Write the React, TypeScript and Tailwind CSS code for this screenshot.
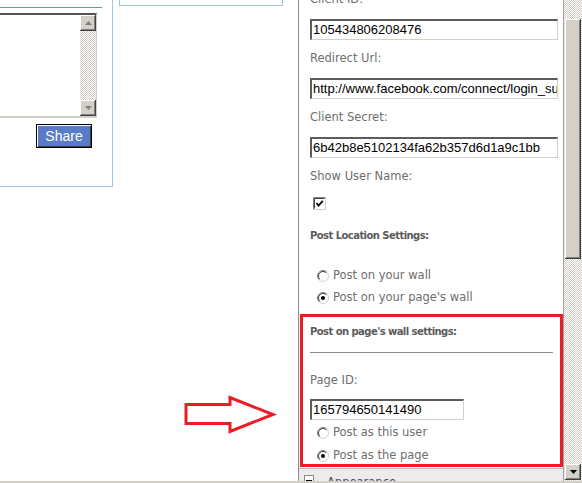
import React from 'react';

const labelCls = "text-[11.5px] leading-[15px] text-[#6e6e6e] font-['DejaVu_Sans',Verdana,sans-serif]";
const headCls = "text-[10px] leading-[15px] font-bold tracking-[-0.55px] text-[#5a5a5a] font-['DejaVu_Sans',Verdana,sans-serif]";
const ruleCls = "h-px w-[243px] bg-[#8c8c8c]";
const bevel = "bg-[#d4d0c8] shadow-[inset_-1px_-1px_0_#404040,inset_1px_1px_0_#ffffff,inset_-2px_-2px_0_#808080]";
const checker = "bg-[repeating-conic-gradient(#d4d0c8_0_25%,#ffffff_0_50%)] bg-[length:2px_2px]";

const Radio: React.FC<{ checked?: boolean }> = ({ checked = false }) => (
  <svg width="12" height="12" viewBox="0 0 12 12" className="shrink-0">
    <circle cx="6" cy="6" r="5.5" fill="#ffffff" />
    <path d="M2.1 9.9 A5.5 5.5 0 0 1 9.9 2.1" stroke="#808080" fill="none" />
    <path d="M9.9 2.1 A5.5 5.5 0 0 1 2.1 9.9" stroke="#d4d0c8" fill="none" />
    <path d="M2.8 9.2 A4.5 4.5 0 0 1 9.2 2.8" stroke="#404040" fill="none" />
    {checked && <circle cx="6" cy="6" r="2" fill="#000000" />}
  </svg>
);

const RadioRow: React.FC<{ text: string; checked?: boolean; className?: string }> = ({
  text,
  checked,
  className = ''
}) => (
  <div className={`flex items-center h-[15px] pl-[7px] gap-[4px] ${className}`}>
    <Radio checked={checked} />
    <span className={labelCls}>{text}</span>
  </div>
);

const TextBox: React.FC<{ value: string; width: string }> = ({ value, width }) => (
  <div
    className={`${width} h-[21px] border-t-2 border-l-2 border-r border-b border-t-[#5c5c5c] border-l-[#5c5c5c] border-r-[#d4d0c8] border-b-[#d4d0c8] overflow-hidden whitespace-nowrap pl-[1px] text-[13px] leading-[18px] text-black font-['Liberation_Sans',Arial,sans-serif]`}
  >
    {value}
  </div>
);

const Field: React.FC<{ label: string; value: string; first?: boolean }> = ({ label, value, first }) => (
  <>
    <div className={`${labelCls} ${first ? 'mt-[-8px]' : 'mt-[11px]'}`}>{label}</div>
    <div className="mt-[12px]">
      <TextBox value={value} width="w-[248px]" />
    </div>
  </>
);

const Arrow: React.FC = () => (
  <svg width="94" height="40" viewBox="0 0 94 40" className="block">
    <polygon
      points="2,9.5 46,9.5 46,2.5 89,19.5 46,36.5 46,28.5 2,28.5"
      fill="#ffffff"
      stroke="#ed1c24"
      strokeWidth="3"
      strokeLinejoin="miter"
    />
  </svg>
);

export default function App() {
  return (
    <div className="w-[582px] h-[483px] overflow-hidden bg-white flex flex-col">
      <div className="flex h-[481px]">
        {/* left side */}
        <div className="w-[298px] flex flex-col">
          <div className="flex items-start">
            <div className="w-[113px] h-[187px] border-r border-b border-[#9ec6e4] pt-[7px]">
              <div className="h-px w-[102px] bg-[#5b9bd5]" />
              <div className="mt-[5px] w-[97px] h-[105px] flex border-t-2 border-t-[#555555] border-r border-b-2 border-r-[#d4d0c8] border-b-[#d4d0c8]">
                <div className="flex-1 bg-white" />
                <div className={`w-[16px] flex flex-col ${checker}`}>
                  <div className={`h-[16px] flex items-center justify-center ${bevel}`}>
                    <svg width="7" height="4" viewBox="0 0 7 4"><polygon points="3.5,0 7,4 0,4" fill="#808080" /></svg>
                  </div>
                  <div className="flex-1" />
                  <div className={`h-[16px] flex items-center justify-center ${bevel}`}>
                    <svg width="7" height="4" viewBox="0 0 7 4"><polygon points="0,0 7,0 3.5,4" fill="#808080" /></svg>
                  </div>
                </div>
              </div>
              <div className="mt-[6px] ml-[36px] w-[56px] h-[24px] border border-black bg-[#5a7bc7] shadow-[inset_1px_1px_0_#ffffff,inset_-1px_-1px_0_#404040] flex items-center justify-center text-white text-[14px] font-['Liberation_Sans',Arial,sans-serif]">
                Share
              </div>
            </div>
            <div className="ml-[6px] w-[164px] h-[6px] border-x border-b border-[#9ec6e4]" />
          </div>
          <div className="mt-[208px] ml-[184px]">
            <Arrow />
          </div>
        </div>

        {/* settings panel */}
        <div className="w-[265px] border-l border-[#8a8a8a] flex flex-col overflow-hidden pl-[11px]">
          <Field first label="Client ID:" value="105434806208476" />
          <Field label="Redirect Url:" value="http://www.facebook.com/connect/login_success.html" />
          <Field label="Client Secret:" value="6b42b8e5102134fa62b357d6d1a9c1bb" />
          <div className={`${labelCls} mt-[11px]`}>Show User Name:</div>
          <svg width="13" height="13" viewBox="0 0 13 13" className="mt-[13px] ml-[3px] shrink-0">
            <rect x="0" y="0" width="13" height="13" fill="#ffffff" />
            <path d="M0.5 12.5 V0.5 H12.5" stroke="#808080" fill="none" />
            <path d="M1.5 11.5 V1.5 H11.5" stroke="#404040" fill="none" />
            <path d="M0.5 12.5 H12.5 V0.5" stroke="#d4d0c8" fill="none" />
            <path d="M3.5 6 L5.5 8.5 L9.8 3.8" stroke="#000000" strokeWidth="1.8" fill="none" />
          </svg>
          <div className={`${headCls} mt-[18px]`}>Post Location Settings:</div>
          <div className={`${ruleCls} mt-[12px]`} />
          <RadioRow className="mt-[13px]" text="Post on your wall" />
          <RadioRow className="mt-[7px]" text="Post on your page's wall" checked />

          <div className="mt-[9px] -ml-[10px] w-[263px] border-[3px] border-[#ed1c24] pl-[7px] pt-[7px] pb-[1px] shrink-0">
            <div className={headCls}>Post on page's wall settings:</div>
            <div className={`${ruleCls} mt-[13px]`} />
            <div className={`${labelCls} mt-[20px]`}>Page ID:</div>
            <div className="mt-[11px]">
              <TextBox value="165794650141490" width="w-[154px]" />
            </div>
            <RadioRow className="mt-[5px]" text="Post as this user" />
            <RadioRow className="mt-[8px]" text="Post as the page" checked />
          </div>

          <div className="mt-[1px] -ml-[11px] flex-1 border-t border-[#bdbdbd] bg-[#ececec] pl-[5px] pt-[6px] flex items-start gap-[13px] shrink-0">
            <div className="w-[10px] h-[10px] border border-[#8a8a8a] bg-white flex items-center justify-center shrink-0">
              <div className="w-[6px] h-px bg-black" />
            </div>
            <span className="text-[11.5px] leading-[15px] text-[#4b4b68] font-['DejaVu_Sans',Verdana,sans-serif]">Appearance</span>
          </div>
        </div>

        {/* scrollbar */}
        <div className={`w-[19px] border-l border-[#a0a0a0] flex flex-col ${checker}`}>
          <div className={`mt-[19px] ml-[1px] w-[16px] h-[240px] ${bevel}`} />
          <div className="flex-1" />
          <div className={`mb-[1px] ml-[1px] w-[16px] h-[16px] flex items-center justify-center ${bevel}`}>
            <svg width="7" height="4" viewBox="0 0 7 4"><polygon points="0,0 7,0 3.5,4" fill="#000000" /></svg>
          </div>
        </div>
      </div>
      <div className="h-[2px] bg-[#d4d0c8]" />
    </div>
  );
}
